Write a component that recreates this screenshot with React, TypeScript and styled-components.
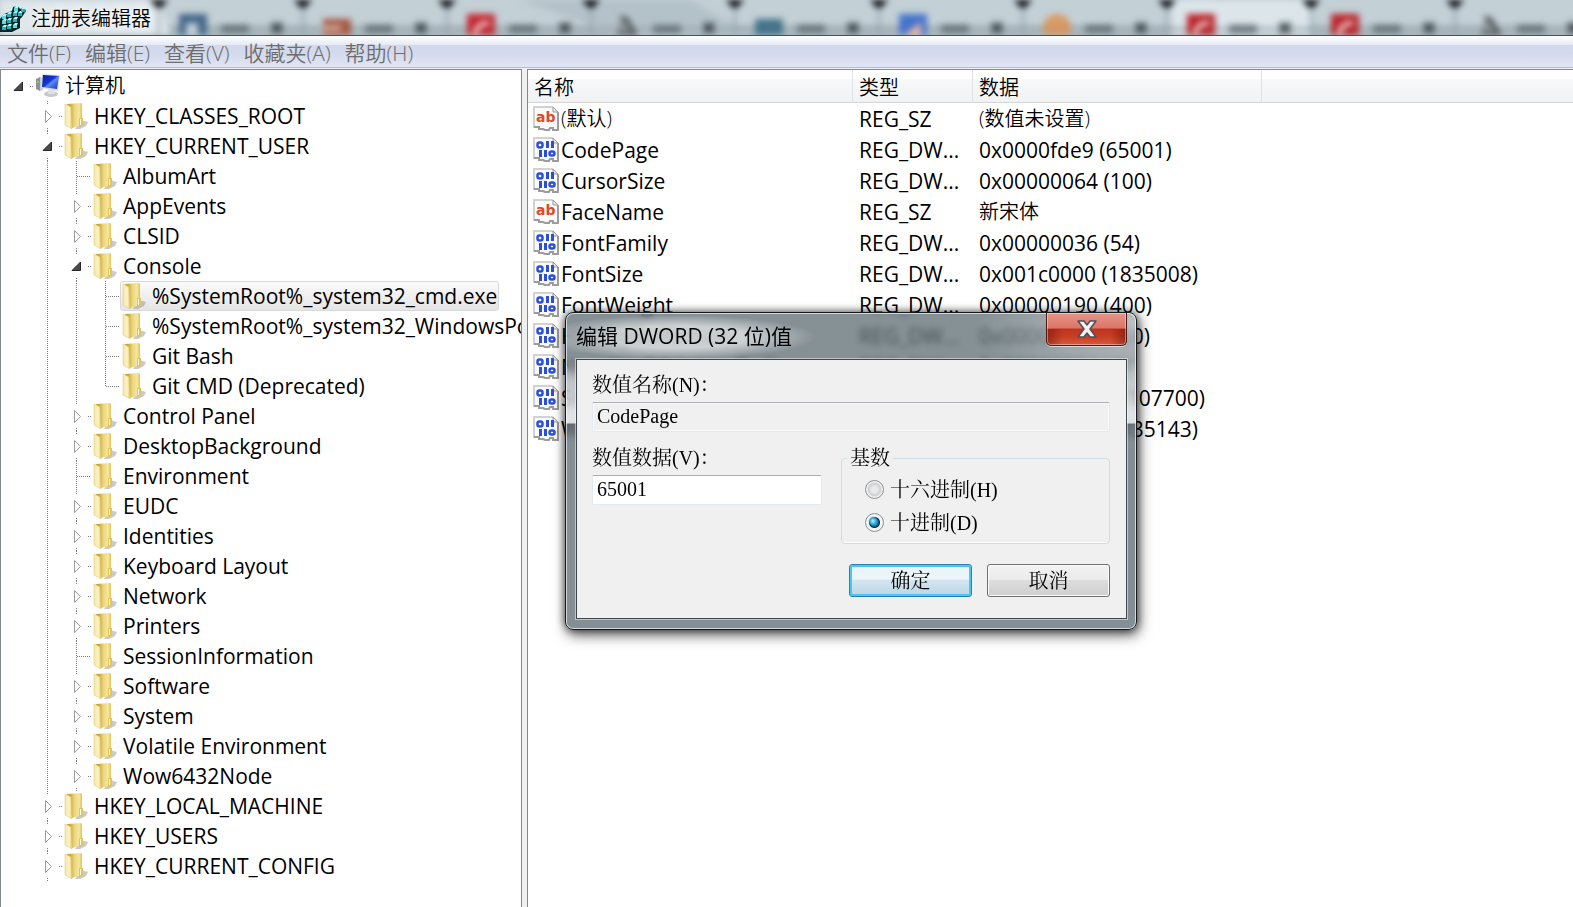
import React, { useState } from 'react';
import styled, { createGlobalStyle, css } from 'styled-components';

const UI_FONT = '"Open Sans", "Noto Sans CJK SC", sans-serif';
const SONG_FONT = '"Liberation Serif", "Noto Serif CJK SC", "Noto Sans CJK SC", serif';

const GlobalStyle = createGlobalStyle`
  * { box-sizing: border-box; }
  body { margin: 0; background: #fff; color: #000; font-family: ${UI_FONT}; }
`;

/* ---------- window ---------- */

const Window = styled.main`
  position: relative;
  display: flex;
  flex-direction: column;
  height: 100vh;
  overflow: hidden;
  background: #f0f0f0;
`;

const TitleBar = styled.header`
  position: relative;
  display: flex;
  align-items: center;
  gap: 5px;
  height: 36px;
  flex: none;
  overflow: hidden;
  background: linear-gradient(#c3d0d6 0 60%, #a9b7bd 100%);
  border-bottom: 1px solid #4c4f56;
`;

const Backdrop = styled.svg`
  position: absolute;
  top: 0;
  left: 0;
  height: 35px;
  filter: blur(3px);
`;

const WindowTitle = styled.h1`
  position: relative;
  margin: 0;
  padding-top: 2px;
  font-size: 20px;
  font-weight: 350;
  line-height: 30px;
  text-shadow: 0 0 8px #fff, 0 0 12px #fff;
`;

const AppIcon = styled.svg`
  position: relative;
  flex: none;
`;

const MenuBar = styled.nav`
  display: flex;
  gap: 14px;
  align-items: center;
  height: 33px;
  flex: none;
  padding-left: 7px;
  background: linear-gradient(#fff 0, #e4e9f4 9px, #d3d9ec 9px, #d4daec 18px, #e0e6f6 31px, #b5bcc9 31px, #b5bcc9 32px, #f0f2f6 32px);
`;

const MenuItem = styled.button`
  padding: 0;
  border: 0;
  background: none;
  color: #6d6d6d;
  font-family: inherit;
  font-size: 21px;
  font-weight: 350;
  line-height: 30px;
`;

const Panes = styled.div`
  display: grid;
  grid-template-columns: 522px 1fr;
  column-gap: 5px;
  flex: 1;
  min-height: 0;
`;

const Pane = styled.section`
  min-width: 0;
  overflow: hidden;
  background: #fff;
  border: 1px solid #828790;
  border-bottom: 0;

  &:last-child {
    border-right: 0;
  }
`;

/* ---------- tree ---------- */

const Tree = styled.ul`
  margin: 0;
  padding: 1px 0 0 3px;
  list-style: none;
`;

const TreeRow = styled.li`
  display: flex;
  height: 30px;
`;

const Guide = styled.svg`
  flex: none;
  width: 29px;
  height: 30px;
`;

const Node = styled.span<{ $selected?: boolean }>`
  display: flex;
  align-items: center;
  gap: 4px;
  flex: none;
  padding: 0 1px;
  border: 1px solid transparent;
  border-radius: 3px;
  font-size: 21px;
  line-height: 28px;
  white-space: nowrap;
  ${(p) => p.$selected && css`
    border-color: #d9d9d9;
    background: linear-gradient(#fafafa, #e5e5e5);
  `}
`;

const Cjk = styled.span`
  font-size: 20px;
  font-weight: 350;
`;

/* ---------- value list ---------- */

const ValueTable = styled.table`
  width: 100%;
  border-collapse: separate;
  border-spacing: 0;
  table-layout: fixed;
  font-size: 21px;
  line-height: 30px;
`;

const HeadCell = styled.th<{ $width?: number }>`
  width: ${(p) => (p.$width ? `${p.$width}px` : 'auto')};
  height: 33px;
  padding: 3px 6px 0;
  line-height: 29px;
  vertical-align: bottom;
  text-align: left;
  font-size: 20px;
  font-weight: 350;
  background: linear-gradient(#fff 9px, #f7f8fa 9px, #f1f2f4);
  border-bottom: 1px solid #d5d5d5;
  border-right: ${(p) => (p.$width ? '1px solid #dfe1e5' : '0')};
`;

const Cell = styled.td`
  height: 31px;
  padding: 0 6px;
  white-space: nowrap;
`;

const NameCell = styled.td`
  height: 31px;
  padding: 0 0 0 5px;
`;

const ValueName = styled.span`
  display: flex;
  align-items: center;
  gap: 2px;
`;

/* ---------- dialog ---------- */

const Dialog = styled.form`
  position: absolute;
  left: 565px;
  top: 312px;
  width: 572px;
  padding: 0 9px 10px 10px;
  border: 1px solid #16191b;
  border-radius: 8px;
  background:
    radial-gradient(140px 22px at 110px 24px, rgba(255, 255, 255, 0.6) 50%, rgba(255, 255, 255, 0) 100%),
    radial-gradient(160px 70px at 100% 12px, rgba(255, 255, 255, 0.45), rgba(255, 255, 255, 0) 100%),
    linear-gradient(
      rgba(91, 106, 112, 0.74) 0,
      rgba(91, 106, 112, 0.74) 48px,
      rgba(150, 160, 165, 0.74) 60px,
      rgba(205, 210, 212, 0.8) 90px,
      rgba(225, 228, 229, 0.85) 110px,
      rgba(78, 90, 96, 0.8) 111px,
      rgba(118, 131, 137, 0.9) 130px,
      rgba(118, 131, 137, 0.9) 100%
    );
  backdrop-filter: blur(3px);
  box-shadow:
    inset 0 0 0 1px rgba(255, 255, 255, 0.65),
    0 0 9px rgba(0, 0, 0, 0.65),
    2px 5px 14px rgba(0, 0, 0, 0.6);
`;

const DialogBar = styled.div`
  display: flex;
  justify-content: space-between;
  height: 46px;
`;

const DialogTitle = styled.h2`
  margin: 0;
  font-size: 21px;
  font-weight: 400;
  line-height: 46px;
`;

const CloseButton = styled.button`
  display: flex;
  align-items: center;
  justify-content: center;
  width: 81px;
  height: 33px;
  padding: 0;
  border: 1px solid #4d1a16;
  border-top: 0;
  border-radius: 0 0 5px 5px;
  background:
    linear-gradient(90deg, rgba(90, 10, 5, 0.45), rgba(90, 10, 5, 0) 20% 80%, rgba(90, 10, 5, 0.45)) 0 16px no-repeat,
    linear-gradient(#e5958a 0, #dc7667 15px, #c03420 16px, #c93f24 24px, #d65a41 32px);
  box-shadow: inset 0 0 0 1px rgba(255, 255, 255, 0.4), 0 1px 0 rgba(255, 255, 255, 0.6);
`;

const Client = styled.div`
  display: flex;
  flex-direction: column;
  padding: 12px 16px 21px 15px;
  border: 1px solid #3f474b;
  background: #f0f0f0;
  box-shadow: 0 0 0 1px rgba(255, 255, 255, 0.5);
  font-family: ${SONG_FONT};
  font-size: 20px;
  line-height: 26px;
`;

const Field = styled.div`
  display: flex;
  flex-direction: column;
  gap: 4px;
`;

const TextBox = styled.input`
  width: 100%;
  height: 30px;
  padding: 0 4px 1px;
  border: 1px solid #e3e9ef;
  border-top-color: #abadb3;
  border-radius: 2px;
  background: #fff;
  color: #000;
  font-family: inherit;
  font-size: 20px;
  outline: 0;

  &:read-only {
    background: #f0f0f0;
    box-shadow: inset 0 0 0 1px #fafafa;
  }
`;

const Columns = styled.div`
  display: grid;
  grid-template-columns: 1fr 269px;
  gap: 19px;
  margin-top: 13px;
`;

const Group = styled.fieldset`
  min-width: 0;
  margin: 0;
  padding: 2px 5px 4px;
  border: 1px solid #d0dce5;
  border-radius: 4px;
  box-shadow: inset 0 -1px 0 #fff;
`;

const GroupTitle = styled.legend`
  padding: 0 3px;
`;

const Choice = styled.label`
  display: flex;
  align-items: center;
  gap: 6px;
  height: 33px;
  padding-left: 18px;
`;

const Radio = styled.input`
  appearance: none;
  width: 19px;
  height: 19px;
  margin: 0;
  border: 1px solid #8e8f8f;
  border-radius: 50%;
  background: radial-gradient(circle, #e9eaeb 0 3px, #cdd0d4 6px, #f4f4f4 8px);

  &:checked {
    background:
      radial-gradient(circle at 7px 7px, #c5f2ff 0, rgba(60, 180, 225, 0.9) 3px, rgba(10, 60, 90, 0) 5px),
      radial-gradient(circle, #1583b5 0 3px, #0b2f4a 5px, #f4f4f4 6px);
  }
`;

const Actions = styled.div`
  display: flex;
  justify-content: flex-end;
  gap: 15px;
  margin-top: 20px;
`;

const PushButton = styled.button<{ $primary?: boolean }>`
  width: 123px;
  height: 33px;
  padding: 0;
  border: 1px solid ${(p) => (p.$primary ? '#2c7fb0' : '#707070')};
  border-radius: 3px;
  background: ${(p) => (p.$primary
    ? 'linear-gradient(#ebf4f9 0 45%, #d3e6f0 50%, #b9d6e5)'
    : 'linear-gradient(#f2f2f2 0, #ebebeb 48%, #dddddd 50%, #cfcfcf)')};
  box-shadow: ${(p) => (p.$primary ? 'inset 0 0 0 2px #46c8ef' : 'inset 0 0 0 1px #fbfbfb')};
  color: #000;
  font-family: inherit;
  font-size: 20px;
  line-height: 26px;
`;

/* ---------- drawings ---------- */

const tabIcons = ['', '#3d6186', '#a4513c', '#c42029', '#6b6f72', '#3f6f86', '#3e6fcb', '#dd8f4c', '#b81d24', '#b81d24', '#5f6467'];

const BrowserTabs = () => (
  <Backdrop width="1600" height="35" viewBox="0 0 1600 35" aria-hidden="true">
    <path d="M0 0h160l10 35H0z" fill="#dfe7eb" />
    <path d="M520 0h170l60 35h-130z" fill="#b3c1c8" />
    <path d="M1172 0h140v35h-140z" fill="#dbe5ea" />
    <path d="M170 29h1430" stroke="#93a1a8" strokeWidth="3" />
    {tabIcons.map((color, i) => {
      const x = 15 + i * 144;
      return (
        <g key={i}>
          {i > 0 && <path d={`M${x - 13} -4h26l-13 14z`} fill="#05080b" />}
          {i > 0 && <path d={`M${x} 7v28`} stroke="#8f9ea6" strokeWidth="2" />}
          {color && (
            <>
              {color === '#dd8f4c' && <circle cx={x + 34} cy="28" r="14" fill={color} opacity=".8" />}
              {color !== '#dd8f4c' && i !== 4 && i !== 10 && (
                <rect x={x + 20} y={i === 2 || i === 5 ? 19 : 14} width="28" height="24" fill={color} opacity=".95" />
              )}
              {(i === 3 || i === 8 || i === 9) && <path d={`M${x + 28} 34q2 -11 14 -11`} stroke="#f3dada" strokeWidth="4" fill="none" />}
              {i === 1 && <path d={`M${x + 27} 36v-13h12v13`} fill="#c0ced5" />}
              {i === 2 && <path d={`M${x + 20} 28h18`} stroke="#e0c8b8" strokeWidth="4" />}
              {(i === 4 || i === 10) && <path d={`M${x + 30} 17l6 3l8 14h-18`} stroke="#4d5255" strokeWidth="4" fill="#8b9296" />}
              {i === 6 && <path d={`M${x + 24} 36l18 -14v14z`} fill="#e6b3a4" />}
              <path d={`M${x + 62} 29h28`} stroke="#67747a" strokeWidth="8" />
              <path d={`M${x + 113} 23l10 10m0 -10l-10 10`} stroke="#3a4449" strokeWidth="4" />
            </>
          )}
        </g>
      );
    })}
  </Backdrop>
);

const cubes: [number, number][] = [
  [3, 14], [8, 12], [14, 11], [3, 19], [8, 18], [14, 17], [14, 23], [8, 24], [3, 25], [15, 6], [19, 11], [22, 7],
];

const RegeditIcon = () => (
  <AppIcon width="26" height="32" viewBox="0 0 26 32" aria-hidden="true">
    <path d="M0 17l4-5 8-3 1-4 5-1 2 3 4-2 2 4-4 6-2 2v9l-8 4H0z" fill="#06282b" />
    {cubes.map(([x, y], i) => (
      <g key={i}>
        <path d={`M${x - 1} ${y}l2 -2h3l-1 2z`} fill="#b5f8f6" />
        <rect x={x - 1} y={y} width="4" height="3" fill={i % 3 ? '#1fb4b8' : '#54dedc'} />
      </g>
    ))}
  </AppIcon>
);

const ComputerIcon = () => (
  <svg width="26" height="26" viewBox="0 0 26 26" aria-hidden="true">
    <defs>
      <linearGradient id="screen" x1="0" x2="1" y1="0" y2="1">
        <stop offset="0" stopColor="#0b1c9c" />
        <stop offset=".45" stopColor="#1535d8" />
        <stop offset=".55" stopColor="#5d8bf2" />
        <stop offset="1" stopColor="#0d2cc4" />
      </linearGradient>
    </defs>
    <path d="M1 6l4-2v14l-4-2z" fill="#8c9298" />
    <path d="M5 4l3 1v12l-3 1z" fill="#c9cdd1" />
    <rect x="2" y="8" width="2" height="2" fill="#5fe04c" />
    <ellipse cx="16" cy="21" rx="7" ry="3" fill="#c4c9ce" />
    <path d="M13 16h6l1 5h-7z" fill="#dfe2e5" />
    <path d="M7 1l18 1-2 16-17-3z" fill="#d8dde2" />
    <path d="M8 2l16 1-2 13-15-2z" fill="url(#screen)" />
  </svg>
);

const FolderIcon = () => (
  <svg width="26" height="26" viewBox="0 0 26 26" aria-hidden="true">
    <defs>
      <linearGradient id="leaf" x1="0" x2="1">
        <stop offset="0" stopColor="#f6e7a6" />
        <stop offset=".6" stopColor="#fbf3c9" />
        <stop offset="1" stopColor="#e6cd72" />
      </linearGradient>
      <linearGradient id="sheet" x1="0" x2="1">
        <stop offset=".2" stopColor="#c9a63a" />
        <stop offset=".5" stopColor="#ecd57c" />
        <stop offset=".8" stopColor="#f6e8a0" />
        <stop offset="1" stopColor="#dfc25a" />
      </linearGradient>
    </defs>
    <path d="M17 17l7 2-2 4-6 3h-5z" fill="#8a8a8a" opacity=".45" />
    <path d="M3 1l14-1 1 1v21l-10 3z" fill="url(#sheet)" />
    <path d="M15 15h4v8l-4 1z" fill="#e2c45a" />
    <path d="M16 16h1v6h-1z" fill="#fff" />
    <path d="M1 1l6 3 1 22-7-4z" fill="url(#leaf)" stroke="#dcc46c" strokeWidth=".5" />
  </svg>
);

const PageIcon = ({ kind }: { kind: 'sz' | 'dword' }) => (
  <svg width="26" height="26" viewBox="0 0 26 26" aria-hidden="true">
    <path d="M1 1h19l5 5v18h-5l-3 1-5-1-3 1-3-3H1z" fill="#fafafa" />
    <path d="M1 22V1h19" fill="none" stroke="#d2d2d2" strokeWidth="2" />
    <path d="M20 1v5h5z" fill="#e9e9e9" stroke="#9b9b9b" strokeWidth="1" />
    <path d="M25 6v18h-5v-2h-3l-1 2h-4l-2-1H6v-2H1" fill="none" stroke="#9c9c9c" strokeWidth="2" />
    {kind === 'sz' ? (
      <text x="3" y="16" fontFamily="DejaVu Sans" fontWeight="700" fontSize="14" fill="#dc4a28">ab</text>
    ) : (
      <g fill="#2a4fdc">
        <rect x="4.500" y="5.500" width="5" height="5" rx="2" fill="none" stroke="#2a4fdc" strokeWidth="2.500" />
        <rect x="13" y="4" width="3" height="7" />
        <rect x="18" y="4" width="3" height="7" />
        <rect x="6" y="13" width="3" height="7" />
        <rect x="11" y="13" width="3" height="7" />
        <rect x="16.500" y="14.500" width="5" height="4" rx="2" fill="none" stroke="#2a4fdc" strokeWidth="2.500" />
      </g>
    )}
  </svg>
);

type Mark = 'open' | 'closed' | 'leaf' | 'last' | 'line' | 'blank';

/* One 29px column of the tree: dotted connectors and, where there is one, the expander. */
const GuideCell = ({ mark, root }: { mark: Mark; root?: boolean }) => (
  <Guide viewBox="0 0 29 30" aria-hidden="true">
    <g stroke="#7c7c7c" strokeDasharray="1 1" fill="none">
      {(mark === 'line' || mark === 'leaf') && <path d="M14.500 0v30" />}
      {mark === 'last' && <path d="M14.500 0v16" />}
      {(mark === 'leaf' || mark === 'last') && <path d="M15 15.500h14" />}
      {(mark === 'open' || mark === 'closed') && <path d="M26 15.500h3" />}
      {(mark === 'open' || mark === 'closed') && !root && <path d="M14.500 0v4M14.500 27v3" />}
    </g>
    {mark === 'open' && <path d="M18.500 11v8.500h-8.500z" fill="#4a4a4a" stroke="#262626" />}
    {mark === 'closed' && <path d="M12.500 9.500l6 6-6 6z" fill="#fff" stroke="#9c9c9c" />}
  </Guide>
);

/* ---------- data ---------- */

const tree: [string, Mark[]][] = [
  ['HKEY_CLASSES_ROOT', ['closed']],
  ['HKEY_CURRENT_USER', ['open']],
  ['AlbumArt', ['line', 'leaf']],
  ['AppEvents', ['line', 'closed']],
  ['CLSID', ['line', 'closed']],
  ['Console', ['line', 'open']],
  ['%SystemRoot%_system32_cmd.exe', ['line', 'line', 'leaf']],
  ['%SystemRoot%_system32_WindowsPowerShell', ['line', 'line', 'leaf']],
  ['Git Bash', ['line', 'line', 'leaf']],
  ['Git CMD (Deprecated)', ['line', 'line', 'last']],
  ['Control Panel', ['line', 'closed']],
  ['DesktopBackground', ['line', 'closed']],
  ['Environment', ['line', 'leaf']],
  ['EUDC', ['line', 'closed']],
  ['Identities', ['line', 'closed']],
  ['Keyboard Layout', ['line', 'closed']],
  ['Network', ['line', 'closed']],
  ['Printers', ['line', 'closed']],
  ['SessionInformation', ['line', 'leaf']],
  ['Software', ['line', 'closed']],
  ['System', ['line', 'closed']],
  ['Volatile Environment', ['line', 'closed']],
  ['Wow6432Node', ['line', 'closed']],
  ['HKEY_LOCAL_MACHINE', ['closed']],
  ['HKEY_USERS', ['closed']],
  ['HKEY_CURRENT_CONFIG', ['closed']],
];

const values: [string, string, string][] = [
  ['(默认)', 'REG_SZ', '(数值未设置)'],
  ['CodePage', 'REG_DW...', '0x0000fde9 (65001)'],
  ['CursorSize', 'REG_DW...', '0x00000064 (100)'],
  ['FaceName', 'REG_SZ', '新宋体'],
  ['FontFamily', 'REG_DW...', '0x00000036 (54)'],
  ['FontSize', 'REG_DW...', '0x001c0000 (1835008)'],
  ['FontWeight', 'REG_DW...', '0x00000190 (400)'],
  ['HistoryBufferSize', 'REG_DW...', '0x0000012c (300)'],
  ['NumberOfHistoryBuffers', 'REG_DW...', '0x00000004 (4)'],
  ['ScreenBufferSize', 'REG_DW...', '0x00c801f4 (13107700)'],
  ['WindowSize', 'REG_DW...', '0x001c0087 (1835143)'],
];

const isCjk = (text: string) => /[\u4e00-\u9fff]/.test(text);
const Label = ({ text }: { text: string }) => (isCjk(text) ? <Cjk>{text}</Cjk> : <span>{text}</span>);

export default function App() {
  const [data, setData] = useState('65001');
  const [base, setBase] = useState('dec');

  return (
    <Window>
      <GlobalStyle />
      <TitleBar>
        <BrowserTabs />
        <RegeditIcon />
        <WindowTitle>注册表编辑器</WindowTitle>
      </TitleBar>
      <MenuBar>
        {['文件(F)', '编辑(E)', '查看(V)', '收藏夹(A)', '帮助(H)'].map((m) => (
          <MenuItem key={m} type="button">{m}</MenuItem>
        ))}
      </MenuBar>
      <Panes>
        <Pane>
          <Tree>
            <TreeRow>
              <GuideCell mark="open" root />
              <Node><ComputerIcon /><Cjk>计算机</Cjk></Node>
            </TreeRow>
            {tree.map(([name, marks]) => (
              <TreeRow key={name}>
                <GuideCell mark="blank" />
                {marks.map((m, i) => <GuideCell key={i} mark={m} />)}
                <Node $selected={name.endsWith('cmd.exe')}>
                  <FolderIcon />
                  <span>{name}</span>
                </Node>
              </TreeRow>
            ))}
          </Tree>
        </Pane>
        <Pane>
          <ValueTable>
            <thead>
              <tr>
                <HeadCell $width={325}>名称</HeadCell>
                <HeadCell $width={120}>类型</HeadCell>
                <HeadCell $width={289}>数据</HeadCell>
                <HeadCell as="td" />
              </tr>
            </thead>
            <tbody>
              {values.map(([name, type, value]) => (
                <tr key={name}>
                  <NameCell>
                    <ValueName>
                      <PageIcon kind={type === 'REG_SZ' ? 'sz' : 'dword'} />
                      <Label text={name} />
                    </ValueName>
                  </NameCell>
                  <Cell>{type}</Cell>
                  <Cell><Label text={value} /></Cell>
                </tr>
              ))}
            </tbody>
          </ValueTable>
        </Pane>
      </Panes>

      <Dialog aria-labelledby="dialog-title" onSubmit={(e) => e.preventDefault()}>
        <DialogBar>
          <DialogTitle id="dialog-title">编辑 DWORD (32 位)值</DialogTitle>
          <CloseButton type="button" aria-label="关闭">
            <svg width="20" height="18" viewBox="0 0 20 18" aria-hidden="true">
              <path d="M1 1h6l3 4 3-4h6l-6 8 6 8h-6l-3-4-3 4H1l6-8z" fill="#f1f1f1" stroke="#4c4f58" strokeWidth="1.500" strokeLinejoin="round" />
            </svg>
          </CloseButton>
        </DialogBar>
        <Client>
          <Field>
            <label htmlFor="value-name">数值名称(N)：</label>
            <TextBox id="value-name" value="CodePage" readOnly />
          </Field>
          <Columns>
            <Field>
              <label htmlFor="value-data">数值数据(V)：</label>
              <TextBox id="value-data" value={data} onChange={(e) => setData(e.target.value)} />
            </Field>
            <Group>
              <GroupTitle>基数</GroupTitle>
              <Choice>
                <Radio type="radio" name="base" checked={base === 'hex'} onChange={() => setBase('hex')} />
                十六进制(H)
              </Choice>
              <Choice>
                <Radio type="radio" name="base" checked={base === 'dec'} onChange={() => setBase('dec')} />
                十进制(D)
              </Choice>
            </Group>
          </Columns>
          <Actions>
            <PushButton type="submit" $primary>确定</PushButton>
            <PushButton type="button">取消</PushButton>
          </Actions>
        </Client>
      </Dialog>
    </Window>
  );
}
